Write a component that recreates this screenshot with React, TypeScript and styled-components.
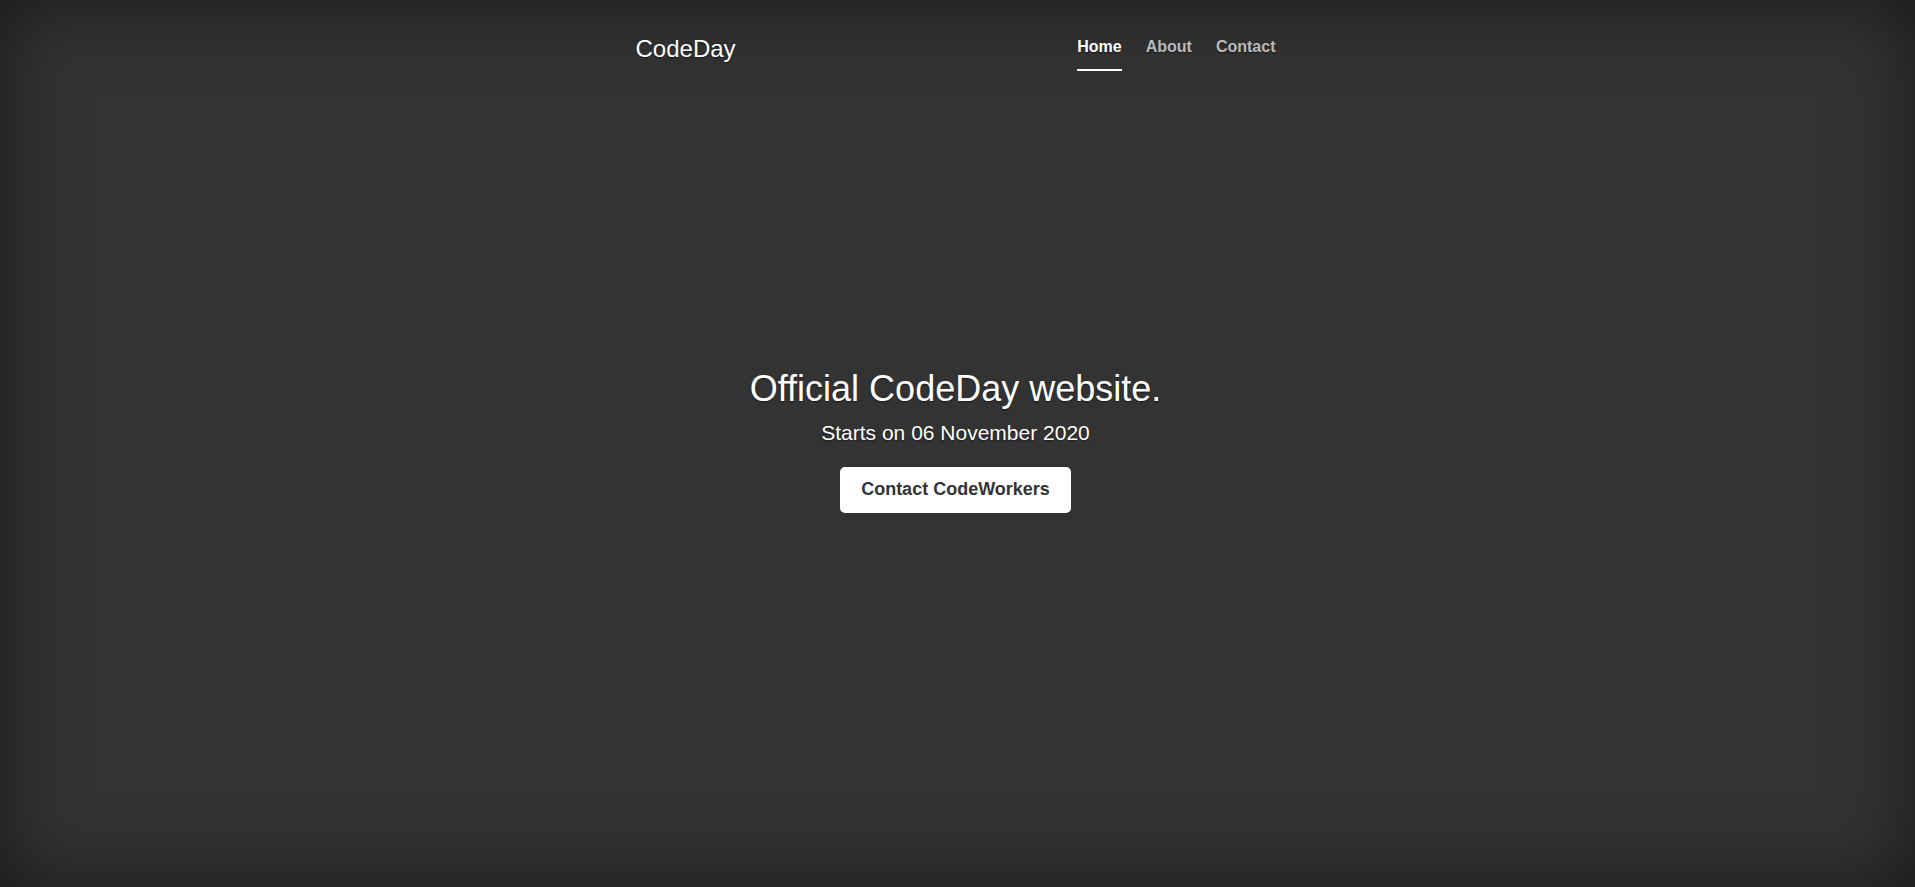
import styled, { createGlobalStyle } from "styled-components";

const GlobalStyle = createGlobalStyle`
    html, body {
        height: 100%;
    }

    body {
        margin: 0;
        background-color: #333;
        color: #fff;
        font-family: "Liberation Sans", Arial, sans-serif;
        box-shadow: inset 0 0 5rem rgba(0, 0, 0, 0.5);
        text-shadow: 0 0.05rem 0.1rem rgba(0, 0, 0, 0.5);
    }

    #root {
        height: 100%;
    }
`

const CoverContainer = styled.div`
    max-width: 672px;
    height: 100%;
    margin: 0 auto;
    padding: 0 18px 0 14px;
    box-sizing: border-box;
    display: flex;
    flex-direction: column;
`

const Masthead = styled.header`
    display: flex;
    justify-content: space-between;
    align-items: flex-start;
    padding-top: 27px;
`

const Brand = styled.h3`
    margin: 8px 0 0;
    font-size: 24px;
    font-weight: 400;
    line-height: 1.2;
`

const Nav = styled.nav`
    display: flex;
    gap: 24px;
`

const NavLink = styled.a<{ $active?: boolean }>`
    padding: 8px 0 10px;
    font-size: 16px;
    font-weight: 700;
    line-height: 24px;
    text-decoration: none;
    color: ${p => p.$active ? "#fff" : "rgba(255, 255, 255, 0.7)"};
    border-bottom: 2px solid ${p => p.$active ? "#fff" : "transparent"};
    cursor: pointer;

    &:hover {
        border-bottom-color: rgba(255, 255, 255, 0.25);
    }
`

const Hero = styled.main`
    flex: 1;
    display: flex;
    flex-direction: column;
    justify-content: center;
    align-items: center;
    text-align: center;
    padding-bottom: 78px;
`

const Heading = styled.h1`
    margin: 0 0 7px;
    font-size: 36px;
    font-weight: 400;
    line-height: 1.2;
`

const Lead = styled.p`
    margin: 0 0 19px;
    font-size: 21px;
    font-weight: 400;
    line-height: 1.5;
`

const ContactButton = styled.a`
    display: inline-block;
    padding: 9px 21px 10px;
    font-size: 18px;
    font-weight: 700;
    line-height: 27px;
    color: #333;
    background-color: #fff;
    border-radius: 5px;
    text-decoration: none;
    text-shadow: none;
    cursor: pointer;
`

const App = () => {
    return (
        <>
            <GlobalStyle />
            <CoverContainer>
                <Masthead>
                    <Brand>CodeDay</Brand>
                    <Nav>
                        <NavLink $active>Home</NavLink>
                        <NavLink>About</NavLink>
                        <NavLink>Contact</NavLink>
                    </Nav>
                </Masthead>
                <Hero>
                    <Heading>Official CodeDay website.</Heading>
                    <Lead>Starts on 06 November 2020</Lead>
                    <ContactButton>Contact CodeWorkers</ContactButton>
                </Hero>
            </CoverContainer>
        </>
    )
}

export default App;
